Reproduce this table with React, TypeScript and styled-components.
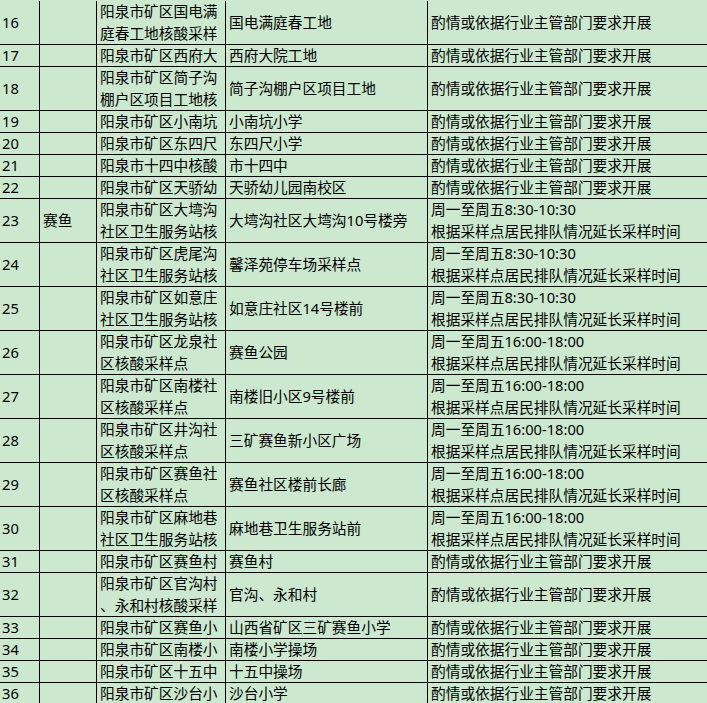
import styled, { createGlobalStyle } from "styled-components";

type Entry = {
  no: string;
  street?: string;
  site: string[];
  place: string;
  time: string[];
};

const ASK = ["酌情或依据行业主管部门要求开展"];
const MORNING = ["周一至周五8:30-10:30", "根据采样点居民排队情况延长采样时间"];
const EVENING = ["周一至周五16:00-18:00", "根据采样点居民排队情况延长采样时间"];

const rows: Entry[] = [
  { no: "16", site: ["阳泉市矿区国电满", "庭春工地核酸采样"], place: "国电满庭春工地", time: ASK },
  { no: "17", site: ["阳泉市矿区西府大"], place: "西府大院工地", time: ASK },
  { no: "18", site: ["阳泉市矿区简子沟", "棚户区项目工地核"], place: "简子沟棚户区项目工地", time: ASK },
  { no: "19", site: ["阳泉市矿区小南坑"], place: "小南坑小学", time: ASK },
  { no: "20", site: ["阳泉市矿区东四尺"], place: "东四尺小学", time: ASK },
  { no: "21", site: ["阳泉市十四中核酸"], place: "市十四中", time: ASK },
  { no: "22", site: ["阳泉市矿区天骄幼"], place: "天骄幼儿园南校区", time: ASK },
  { no: "23", street: "赛鱼", site: ["阳泉市矿区大塆沟", "社区卫生服务站核"], place: "大塆沟社区大塆沟10号楼旁", time: MORNING },
  { no: "24", site: ["阳泉市矿区虎尾沟", "社区卫生服务站核"], place: "馨泽苑停车场采样点", time: MORNING },
  { no: "25", site: ["阳泉市矿区如意庄", "社区卫生服务站核"], place: "如意庄社区14号楼前", time: MORNING },
  { no: "26", site: ["阳泉市矿区龙泉社", "区核酸采样点"], place: "赛鱼公园", time: EVENING },
  { no: "27", site: ["阳泉市矿区南楼社", "区核酸采样点"], place: "南楼旧小区9号楼前", time: EVENING },
  { no: "28", site: ["阳泉市矿区井沟社", "区核酸采样点"], place: "三矿赛鱼新小区广场", time: EVENING },
  { no: "29", site: ["阳泉市矿区赛鱼社", "区核酸采样点"], place: "赛鱼社区楼前长廊", time: EVENING },
  { no: "30", site: ["阳泉市矿区麻地巷", "社区卫生服务站核"], place: "麻地巷卫生服务站前", time: EVENING },
  { no: "31", site: ["阳泉市矿区赛鱼村"], place: "赛鱼村", time: ASK },
  { no: "32", site: ["阳泉市矿区官沟村", "、永和村核酸采样"], place: "官沟、永和村", time: ASK },
  { no: "33", site: ["阳泉市矿区赛鱼小"], place: "山西省矿区三矿赛鱼小学", time: ASK },
  { no: "34", site: ["阳泉市矿区南楼小"], place: "南楼小学操场", time: ASK },
  { no: "35", site: ["阳泉市矿区十五中"], place: "十五中操场", time: ASK },
  { no: "36", site: ["阳泉市矿区沙台小"], place: "沙台小学", time: ASK },
];

function App() {
  return (
    <>
      <GlobalStyle />
      <Sheet>
        {rows.map((r) => {
          const tall = r.site.length > 1 || r.time.length > 1;
          return (
            <Row key={r.no} $tall={tall}>
              <Cell $w={40} $pad={2}>{r.no}</Cell>
              <Cell $w={57}>{r.street}</Cell>
              <Cell $w={129}>
                {r.site.map((line) => (
                  <Line key={line}>{line}</Line>
                ))}
              </Cell>
              <Cell $w={202}>{r.place}</Cell>
              <Cell $w={300}>
                {r.time.map((line) => (
                  <Line key={line}>{line}</Line>
                ))}
              </Cell>
            </Row>
          );
        })}
      </Sheet>
    </>
  );
}

const GlobalStyle = createGlobalStyle`
  html, body {
    margin: 0;
    padding: 0;
    background: #cce8cf;
    overflow: hidden;
  }
`;

const Sheet = styled.div`
  width: 707px;
  height: 703px;
  overflow: hidden;
  padding-top: 1px;
  box-sizing: border-box;
  background: #cce8cf;
  font-family: "Noto Sans", "Noto Sans CJK SC", sans-serif;
  font-size: 14.7px;
  color: #000;
`;

const Row = styled.div<{ $tall: boolean }>`
  display: flex;
  height: ${({ $tall }) => ($tall ? 44 : 22)}px;
  box-sizing: border-box;
  border-bottom: 1px solid #000;
`;

const Cell = styled.div<{ $w: number; $pad?: number }>`
  flex: 0 0 ${({ $w }) => $w}px;
  box-sizing: border-box;
  border-right: 1px solid #000;
  padding-left: ${({ $pad }) => $pad ?? 3}px;
  display: flex;
  flex-direction: column;
  justify-content: center;
  line-height: 21.5px;
  white-space: nowrap;
  overflow: hidden;
`;

const Line = styled.span`
  display: block;
`;

export default App;
